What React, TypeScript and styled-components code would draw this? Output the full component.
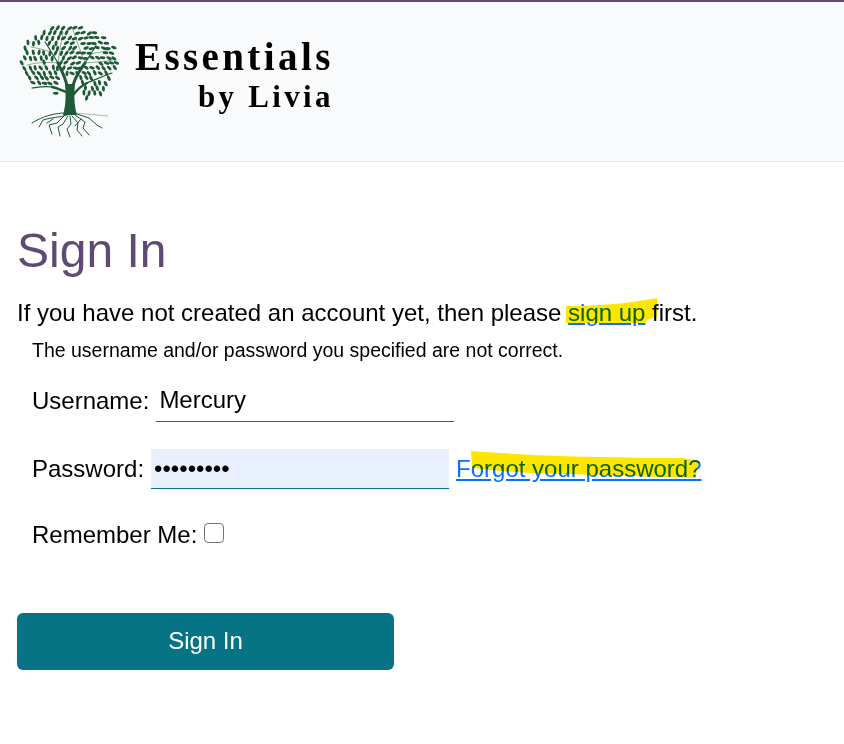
import React from 'react';
import styled, { createGlobalStyle } from 'styled-components';

const GlobalStyle = createGlobalStyle`
  html, body {
    margin: 0;
    padding: 0;
    background: #fff;
    color: #000;
    font-family: "Liberation Sans", Arial, sans-serif;
  }
`;

const Header = styled.header`
  box-sizing: border-box;
  height: 162px;
  display: flex;
  align-items: flex-start;
  padding: 18px 0 0 15px;
  background: #f9fafb;
  border-top: 2px solid #5f4a74;
  border-bottom: 1px solid #e8e8e8;
`;

const Brand = styled.div`
  display: flex;
  flex-direction: column;
  align-items: flex-end;
  margin: 17px 0 0 10px;
  font-family: "Liberation Serif", "Times New Roman", serif;
  font-weight: 700;
  color: #000;
`;

const BrandTop = styled.div`
  font-size: 39px;
  line-height: 40px;
  letter-spacing: 3.4px;
  margin-right: -3px;
`;

const BrandBottom = styled.div`
  font-size: 31px;
  line-height: 40px;
  letter-spacing: 3.3px;
  margin-right: -3px;
`;

const Main = styled.main`
  padding: 61px 17px 0;
`;

const Title = styled.h1`
  margin: 0;
  font-size: 48px;
  line-height: 55px;
  font-weight: 400;
  color: #5f4a74;
`;

const Intro = styled.p`
  margin: 17px 0 0;
  font-size: 24px;
  line-height: 36px;
`;

const Marked = styled.span`
  position: relative;
`;

const Stroke = styled.svg`
  position: absolute;
  left: ${(props) => props.$left}px;
  top: ${(props) => props.$top}px;
  mix-blend-mode: multiply;
  pointer-events: none;
`;

const TextLink = styled.a`
  color: #0d6efd;
  text-decoration: underline;
`;

const FormBlock = styled.form`
  padding-left: 15px;
`;

const ErrorText = styled.div`
  font-size: 19.5px;
  line-height: 24px;
  margin-top: 7px;
`;

const FieldRow = styled.div`
  display: flex;
  align-items: center;
  height: ${(props) => props.$height}px;
  margin-top: ${(props) => props.$top}px;
  font-size: 24px;
`;

const Label = styled.label`
  margin-right: 7px;
  white-space: nowrap;
`;

const TextInput = styled.input`
  box-sizing: border-box;
  width: 298px;
  height: 100%;
  padding: 0 3px;
  border: none;
  border-bottom: 1px solid #07748a;
  outline: none;
  border-radius: 0;
  background: ${(props) => props.$fill || 'transparent'};
  color: #000;
  font-family: inherit;
  font-size: 24px;
  margin-right: 7px;
`;

const Check = styled.input`
  appearance: none;
  box-sizing: border-box;
  width: 20px;
  height: 20px;
  margin: 0 0 5px 0;
  border: 1.5px solid #767676;
  border-radius: 4px;
  background: #fff;
`;

const SubmitButton = styled.button`
  display: block;
  width: 377px;
  height: 57px;
  margin-top: 64px;
  padding: 0 0 2px;
  border: none;
  border-radius: 6px;
  background: #077486;
  color: #fff;
  font-family: inherit;
  font-size: 24px;
`;

const GREEN = '#1e5a35';

// bare wood that the leaves stay clear of
const limbs = [
  [52, 66, 43, 43], [43, 43, 30, 22], [58, 66, 70, 43], [70, 43, 81, 26],
  [59, 74, 72, 63], [72, 63, 97, 53], [51, 72, 37, 67], [37, 67, 17, 68],
  [43, 43, 12, 45], [43, 43, 48, 12], [70, 43, 58, 10], [70, 43, 98, 40],
  [36, 32, 16, 27], [76, 34, 94, 30],
];

const limbDistance = (x: number, y: number) =>
  Math.min(
    ...limbs.map(([x1, y1, x2, y2]) => {
      const dx = x2 - x1;
      const dy = y2 - y1;
      const t = Math.max(0, Math.min(1, ((x - x1) * dx + (y - y1) * dy) / (dx * dx + dy * dy)));
      return Math.hypot(x - x1 - t * dx, y - y1 - t * dy);
    }),
  );

const noise = (n: number) => {
  const v = Math.sin(n * 127.1) * 43758.5453;
  return v - Math.floor(v);
};

const leaves: { x: number; y: number; r: number }[] = [];
let seed = 1;
for (let row = 0; row < 15; row++) {
  for (let col = 0; col < 19; col++) {
    seed++;
    const x = 4 + col * 5.6 + (row % 2) * 2.8 + (noise(seed) - 0.5) * 1.6;
    const y = 8 + row * 5 + (noise(seed + 99) - 0.5) * 1.4;
    const nx = (x - 54) / 49;
    const ny = (y - 42) / 36;
    if (nx * nx + ny * ny > 1 && !(y > 60 && y < 78 && x > 66 && x < 90)) continue;
    if (y > 58 && Math.abs(x - 54) < 12) continue;
    if (y > 71 && x < 36) continue;
    if (limbDistance(x, y) < 1.5) continue;
    const angle = (Math.atan2(y - 55, x - 54) * 180) / Math.PI;
    leaves.push({ x, y, r: angle + 30 + noise(seed + 7) * 40 });
  }
}

const Tree = () => (
  <svg width="110" height="125" viewBox="0 0 110 125" style={{ flex: 'none' }}>
    <g fill={GREEN}>
      {leaves.map((l, i) => (
        <ellipse
          key={i}
          cx={l.x}
          cy={l.y}
          rx="2.9"
          ry="1.5"
          transform={`rotate(${l.r} ${l.x} ${l.y})`}
        />
      ))}
      <path d="M50 64 L60 64 C59 75 59 85 62 95 L48 95 C51 85 51 75 50 64 Z" />
    </g>
    <g fill="none" stroke={GREEN} strokeLinecap="round" strokeLinejoin="round">
      <path strokeWidth="3" d="M52 66 C50 56 46 50 43 43 M58 66 C60 56 65 50 70 43" />
      <path strokeWidth="2.4" d="M59 74 C62 70 66 66 72 63 M51 72 C46 70 42 68 37 67" />
      <path strokeWidth="1.2" d="M43 43 C38 35 34 28 30 22 M70 43 C74 36 78 31 81 26 M72 63 C80 60 88 56 97 53 M37 67 C30 66 24 67 17 68" />
      <path strokeWidth="0.5" d="M43 43 C34 42 24 42 12 45 M43 43 C44 34 46 24 48 12 M70 43 C66 32 62 22 58 10 M70 43 C78 42 88 42 98 40 M36 32 C30 30 22 28 16 27 M76 34 C84 32 90 32 94 30" />
      <path strokeWidth="1" d="M50 93 C40 93 28 96 17 103 M52 95 C44 98 36 97 28 100 L24 107 M50 95 L42 103 L34 105 L37 114 M53 96 L48 104 L43 107 L45 116 M55 96 L56 104 L52 109 L55 117 M57 96 L63 103 L62 110 L67 116 M60 95 L70 102 L68 108 L74 115 M62 94 L74 98 L82 105 L87 108 M38 99 L32 103 M66 99 L60 106" />
      <path strokeWidth="0.7" opacity="0.55" d="M60 93 C70 94 82 95 93 96" />
    </g>
  </svg>
);

const App = () => (
  <>
    <GlobalStyle />
    <Header>
      <Tree />
      <Brand>
        <BrandTop>Essentials</BrandTop>
        <BrandBottom>by Livia</BrandBottom>
      </Brand>
    </Header>
    <Main>
      <Title>Sign In</Title>
      <Intro>
        If you have not created an account yet, then please{' '}
        <Marked>
          <TextLink href="#">sign up</TextLink>{' '}
          <Stroke $left={-2} $top={-1} width="94" height="34" viewBox="0 0 94 34">
            <path d="M0 8 C30 8 60 6 91 0 L91 19 C84 20 80 22 79 25 L0 25 Z" fill="#ffe600" />
          </Stroke>
        </Marked>
        first.
      </Intro>
      <FormBlock>
        <ErrorText>The username and/or password you specified are not correct.</ErrorText>
        <FieldRow $height={43} $top={17}>
          <Label>Username:</Label>
          <TextInput defaultValue="Mercury" />
        </FieldRow>
        <FieldRow $height={40} $top={27}>
          <Label>Password:</Label>
          <TextInput $fill="#e8f0fe" type="password" defaultValue="Mercury12" />
          <Marked>
            <TextLink href="#">Forgot your password?</TextLink>
            <Stroke $left={15} $top={-4} width="232" height="36" viewBox="0 0 232 36">
              <path d="M0 0 C40 3 100 6 136 6 C160 7 190 7 212 7 C218 8 228 9 228 11 L224 27 C170 25 120 24 59 22 C40 21 20 19 1 17 Z" fill="#ffe600" />
            </Stroke>
          </Marked>
        </FieldRow>
        <FieldRow $height={28} $top={32}>
          <Label>Remember Me:</Label>
          <Check type="checkbox" />
        </FieldRow>
      </FormBlock>
      <SubmitButton type="button">Sign In</SubmitButton>
    </Main>
  </>
);

export default App;
